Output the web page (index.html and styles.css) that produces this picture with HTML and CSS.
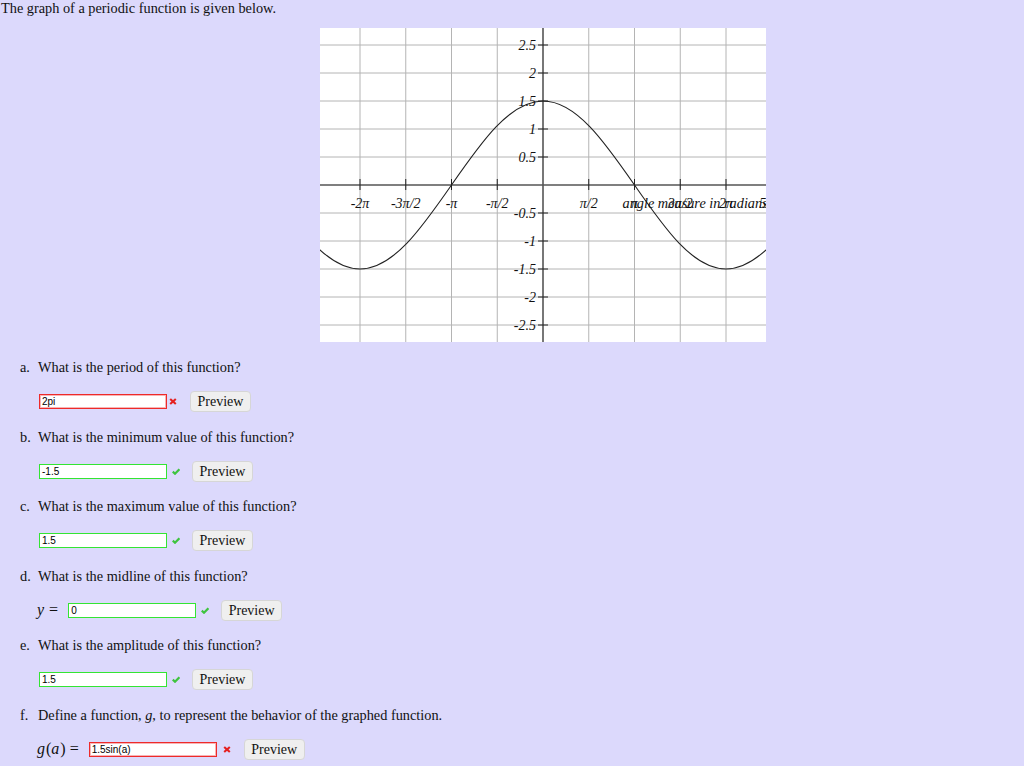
FILE: index.html
```html
<!DOCTYPE html>
<html>
<head>
<meta charset="utf-8">
<link rel="stylesheet" href="styles.css">
</head>
<body>
<p class="title">The graph of a periodic function is given below.</p>
<div class="graph">
<svg width="446" height="314" viewBox="0 0 446 314" xmlns="http://www.w3.org/2000/svg">
  <rect x="0" y="0" width="446" height="314" fill="#fff"/>
  <g stroke="#b4b4b4" stroke-width="1">
    <line x1="40" y1="0" x2="40" y2="314"/>
    <line x1="85.75" y1="0" x2="85.75" y2="314"/>
    <line x1="131.5" y1="0" x2="131.5" y2="314"/>
    <line x1="177.25" y1="0" x2="177.25" y2="314"/>
    <line x1="268.75" y1="0" x2="268.75" y2="314"/>
    <line x1="314.5" y1="0" x2="314.5" y2="314"/>
    <line x1="360.25" y1="0" x2="360.25" y2="314"/>
    <line x1="406" y1="0" x2="406" y2="314"/>
    <line x1="0" y1="17" x2="446" y2="17"/>
    <line x1="0" y1="45" x2="446" y2="45"/>
    <line x1="0" y1="73" x2="446" y2="73"/>
    <line x1="0" y1="101" x2="446" y2="101"/>
    <line x1="0" y1="129" x2="446" y2="129"/>
    <line x1="0" y1="185" x2="446" y2="185"/>
    <line x1="0" y1="213" x2="446" y2="213"/>
    <line x1="0" y1="241" x2="446" y2="241"/>
    <line x1="0" y1="269" x2="446" y2="269"/>
    <line x1="0" y1="297" x2="446" y2="297"/>
  </g>
  <g stroke="#555" stroke-width="1.6">
    <line x1="0" y1="157" x2="446" y2="157"/>
    <line x1="223" y1="0" x2="223" y2="314"/>
  </g>
  <g stroke="#222" stroke-width="1">
    <line x1="40" y1="151" x2="40" y2="162"/>
    <line x1="85.75" y1="151" x2="85.75" y2="162"/>
    <line x1="131.5" y1="151" x2="131.5" y2="162"/>
    <line x1="177.25" y1="151" x2="177.25" y2="162"/>
    <line x1="268.75" y1="151" x2="268.75" y2="162"/>
    <line x1="314.5" y1="151" x2="314.5" y2="162"/>
    <line x1="360.25" y1="151" x2="360.25" y2="162"/>
    <line x1="406" y1="151" x2="406" y2="162"/>
    <line x1="218" y1="17" x2="228" y2="17"/>
    <line x1="218" y1="45" x2="228" y2="45"/>
    <line x1="218" y1="73" x2="228" y2="73"/>
    <line x1="218" y1="101" x2="228" y2="101"/>
    <line x1="218" y1="129" x2="228" y2="129"/>
    <line x1="218" y1="185" x2="228" y2="185"/>
    <line x1="218" y1="213" x2="228" y2="213"/>
    <line x1="218" y1="241" x2="228" y2="241"/>
    <line x1="218" y1="269" x2="228" y2="269"/>
    <line x1="218" y1="297" x2="228" y2="297"/>
  </g>
  <path d="M -51.5 157 C -21.62 200.03, 6.89 241, 40 241 C 73.12 241, 101.66 200.03, 131.5 157 C 161.34 113.97, 189.89 73, 223 73 C 256.11 73, 284.66 113.97, 314.5 157 C 344.34 200.03, 372.88 241, 406 241 C 439.11 241, 467.62 200.03, 497.5 157" fill="none" stroke="#222" stroke-width="1.1"/>
  <g class="ylab" text-anchor="end">
    <text x="216" y="21.5">2.5</text>
    <text x="216" y="49.5">2</text>
    <text x="216" y="77.5">1.5</text>
    <text x="216" y="105.5">1</text>
    <text x="216" y="133.5">0.5</text>
    <text x="216" y="189.5">-0.5</text>
    <text x="216" y="217.5">-1</text>
    <text x="216" y="245.5">-1.5</text>
    <text x="216" y="273.5">-2</text>
    <text x="216" y="301.5">-2.5</text>
  </g>
  <g class="xlab" text-anchor="middle">
    <text x="40" y="180">-2π</text>
    <text x="85.75" y="180">-3π/2</text>
    <text x="131.5" y="180">-π</text>
    <text x="177.25" y="180">-π/2</text>
    <text x="268.75" y="180">π/2</text>
    <text x="314.5" y="180">π</text>
    <text x="360.25" y="180">3π/2</text>
    <text x="406" y="180">2π</text>
    <text x="451.75" y="180">5π/2</text>
  </g>
  <text class="xtitle" x="302.5" y="180">angle measure in radians</text>
</svg>
</div>
<ol class="questions">
  <li>
    <span class="num">a.</span>
    <div class="body">
      <div class="q">What is the period of this function?</div>
      <div class="row">
        <span class="field bad">2pi</span>
        <span class="mark"><svg width="8" height="7" viewBox="0 0 8 7"><path d="M1.2 1 L6.8 6 M6.8 1 L1.2 6" stroke="#e52020" stroke-width="2.1" fill="none"/></svg></span>
        <span class="btn">Preview</span>
      </div>
    </div>
  </li>
  <li>
    <span class="num">b.</span>
    <div class="body">
      <div class="q">What is the minimum value of this function?</div>
      <div class="row">
        <span class="field good">-1.5</span>
        <span class="mark ok"><svg width="8" height="7" viewBox="0 0 8 7"><path d="M0.8 3.6 L3 5.7 L7.4 1.2" stroke="#3ec43e" stroke-width="2.2" fill="none"/></svg></span>
        <span class="btn">Preview</span>
      </div>
    </div>
  </li>
  <li>
    <span class="num">c.</span>
    <div class="body">
      <div class="q">What is the maximum value of this function?</div>
      <div class="row">
        <span class="field good">1.5</span>
        <span class="mark ok"><svg width="8" height="7" viewBox="0 0 8 7"><path d="M0.8 3.6 L3 5.7 L7.4 1.2" stroke="#3ec43e" stroke-width="2.2" fill="none"/></svg></span>
        <span class="btn">Preview</span>
      </div>
    </div>
  </li>
  <li>
    <span class="num">d.</span>
    <div class="body">
      <div class="q">What is the midline of this function?</div>
      <div class="row">
        <span class="math"><i>y</i><span class="eq">=</span></span>
        <span class="field good">0</span>
        <span class="mark ok"><svg width="8" height="7" viewBox="0 0 8 7"><path d="M0.8 3.6 L3 5.7 L7.4 1.2" stroke="#3ec43e" stroke-width="2.2" fill="none"/></svg></span>
        <span class="btn">Preview</span>
      </div>
    </div>
  </li>
  <li>
    <span class="num">e.</span>
    <div class="body">
      <div class="q">What is the amplitude of this function?</div>
      <div class="row">
        <span class="field good">1.5</span>
        <span class="mark ok"><svg width="8" height="7" viewBox="0 0 8 7"><path d="M0.8 3.6 L3 5.7 L7.4 1.2" stroke="#3ec43e" stroke-width="2.2" fill="none"/></svg></span>
        <span class="btn">Preview</span>
      </div>
    </div>
  </li>
  <li>
    <span class="num">f.</span>
    <div class="body">
      <div class="q">Define a function, <i class="mi">g</i>, to represent the behavior of the graphed function.</div>
      <div class="row">
        <span class="math"><i>g</i>(<i>a</i>)<span class="eq">=</span></span>
        <span class="field bad">1.5sin(a)</span>
        <span class="mark wide"><svg width="8" height="7" viewBox="0 0 8 7"><path d="M1.2 1 L6.8 6 M6.8 1 L1.2 6" stroke="#e52020" stroke-width="2.1" fill="none"/></svg></span>
        <span class="btn">Preview</span>
      </div>
    </div>
  </li>
</ol>
</body>
</html>
```
FILE: styles.css
```css
html, body {
  margin: 0;
  padding: 0;
  background: #dcd9fc;
}
body {
  font-family: "Liberation Serif", "Times New Roman", serif;
  font-size: 14.3px;
  color: #111;
}
.title {
  margin: 0;
  padding-left: 1px;
  line-height: 16px;
}
.graph {
  margin: 12px 0 0 320px;
  width: 446px;
  height: 314px;
}
.graph svg {
  display: block;
}
.ylab text, .xlab text {
  font-family: "Liberation Serif", serif;
  font-style: italic;
  font-size: 14px;
  fill: #111;
}
.xtitle {
  font-family: "Liberation Serif", serif;
  font-style: italic;
  font-size: 14.3px;
  fill: #111;
}
.questions {
  margin: 17px 0 0;
  padding-left: 20px;
  list-style: none;
}
.questions li {
  display: grid;
  grid-template-columns: 18px auto;
  margin-bottom: 16.6px;
}
.num {
  line-height: 16px;
}
.q {
  line-height: 16px;
}
.mi {
  font-style: italic;
}
.row {
  margin-top: 16px;
  height: 21px;
  display: flex;
  align-items: center;
}
.field {
  box-sizing: border-box;
  width: 128px;
  height: 15px;
  margin-left: 1px;
  padding-left: 2px;
  background: #fff;
  border: 1px solid #888;
  font-family: "Liberation Sans", Arial, sans-serif;
  font-size: 10px;
  line-height: 13px;
  color: #000;
}
.field.bad {
  border-color: #ee2a2a;
  box-shadow: inset 0 0 0 1px #f8b4b4;
}
.field.good {
  border-color: #33e533;
}
.mark {
  display: flex;
  align-items: center;
  margin-left: 2px;
  margin-right: 13px;
}
.mark.ok {
  margin-left: 5px;
  margin-right: 12px;
}
.mark.wide {
  margin-left: 6px;
}
.btn {
  box-sizing: border-box;
  width: 61px;
  height: 21px;
  line-height: 19px;
  text-align: center;
  background: #efefef;
  border: 1px solid #d6d6d6;
  border-radius: 4px;
  font-size: 14px;
  color: #111;
}
.math {
  font-family: "Liberation Serif", serif;
  font-size: 16px;
  margin-left: -1px;
  margin-right: 9px;
  display: flex;
  align-items: baseline;
}
.math i {
  font-style: italic;
  padding-right: 1px;
}
.eq {
  margin-left: 4px;
}
```
